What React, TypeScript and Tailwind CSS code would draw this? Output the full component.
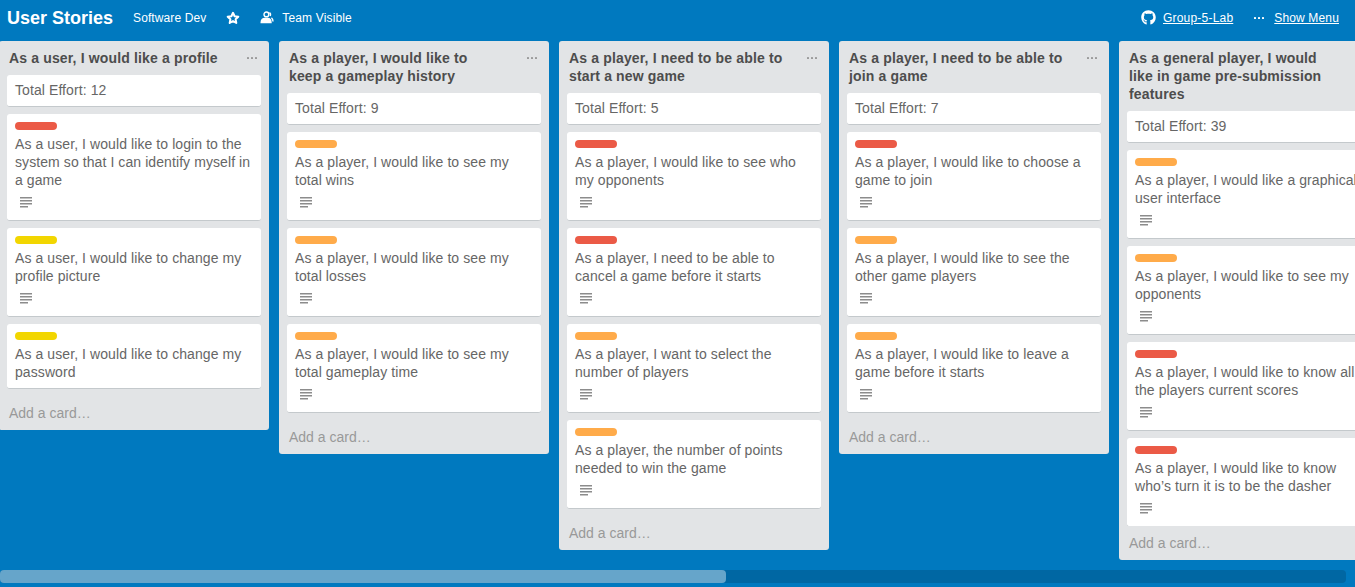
import React from "react";
import { FaGithub } from "react-icons/fa";

type Card = { label: "red" | "orange" | "yellow"; text: string; noBadge?: boolean };
type List = { title: string; effort: number; cards: Card[] };

const labelClass = {
  red: "bg-[#eb5a46]",
  orange: "bg-[#ffab4a]",
  yellow: "bg-[#f2d600]",
};

const lists: List[] = [
  {
    title: "As a user, I would like a profile",
    effort: 12,
    cards: [
      { label: "red", text: "As a user, I would like to login to the system so that I can identify myself in a game" },
      { label: "yellow", text: "As a user, I would like to change my profile picture" },
      { label: "yellow", text: "As a user, I would like to change my password", noBadge: true },
    ],
  },
  {
    title: "As a player, I would like to keep a gameplay history",
    effort: 9,
    cards: [
      { label: "orange", text: "As a player, I would like to see my total wins" },
      { label: "orange", text: "As a player, I would like to see my total losses" },
      { label: "orange", text: "As a player, I would like to see my total gameplay time" },
    ],
  },
  {
    title: "As a player, I need to be able to start a new game",
    effort: 5,
    cards: [
      { label: "red", text: "As a player, I would like to see who my opponents" },
      { label: "red", text: "As a player, I need to be able to cancel a game before it starts" },
      { label: "orange", text: "As a player, I want to select the number of players" },
      { label: "orange", text: "As a player, the number of points needed to win the game" },
    ],
  },
  {
    title: "As a player, I need to be able to join a game",
    effort: 7,
    cards: [
      { label: "red", text: "As a player, I would like to choose a game to join" },
      { label: "orange", text: "As a player, I would like to see the other game players" },
      { label: "orange", text: "As a player, I would like to leave a game before it starts" },
    ],
  },
  {
    title: "As a general player, I would like in game pre-submission features",
    effort: 39,
    cards: [
      { label: "orange", text: "As a player, I would like a graphical user interface" },
      { label: "orange", text: "As a player, I would like to see my opponents" },
      { label: "red", text: "As a player, I would like to know all the players current scores" },
      { label: "red", text: "As a player, I would like to know who\u2019s turn it is to be the dasher" },
    ],
  },
];

function Dots({ className }: { className: string }) {
  return (
    <svg width="10" height="4" viewBox="0 0 10 4" className={className} fill="currentColor">
      <rect x="0" y="1" width="2" height="2" rx="0.6" />
      <rect x="4" y="1" width="2" height="2" rx="0.6" />
      <rect x="8" y="1" width="2" height="2" rx="0.6" />
    </svg>
  );
}

function DescIcon() {
  return (
    <svg width="12" height="12" viewBox="0 0 12 12" className="text-[#8c8c8c]" fill="currentColor">
      <rect x="0" y="0" width="12" height="1.5" />
      <rect x="0" y="3" width="12" height="1.5" />
      <rect x="0" y="6" width="12" height="1.5" />
      <rect x="0" y="9" width="8" height="1.5" />
    </svg>
  );
}

function StarIcon() {
  return (
    <svg width="14" height="14" viewBox="0 0 14 14" fill="none" stroke="white" strokeWidth="2" strokeLinejoin="round">
      <path d="M7 1.8l1.6 3.4 3.7.5-2.7 2.5.7 3.7L7 10.1l-3.3 1.8.7-3.7-2.7-2.5 3.7-.5z" />
    </svg>
  );
}

function TeamIcon() {
  return (
    <svg width="14" height="13" viewBox="0 0 14 13" fill="none" stroke="white" strokeWidth="1.4">
      <circle cx="6.4" cy="3.4" r="2.4" />
      <path d="M1.2 11.6c0-3 1.8-4.2 3.8-4.2h2.6c2 0 3.4 1.2 3.4 4.2z" fill="white" />
      <path d="M9.4 1.6c1 .6 1.3 2.2.8 3.4M11.4 6.8c1 .6 1.6 1.8 1.6 3.6" />
    </svg>
  );
}

function CardView({ card }: { card: Card }) {
  return (
    <div className="mb-[7px] bg-white rounded-[3px] border-b border-[#c4c9cc] pt-2 px-2 pb-[7px]">
      <div className={`${labelClass[card.label]} w-[42px] h-2 rounded-[4px]`} />
      <p className="mt-[5px] text-[14px] leading-[18px] tracking-[0.085px] text-[#666]">{card.text}</p>
      {!card.noBadge && (
        <div className="h-6 pt-2 pl-[5px] flex items-start">
          <DescIcon />
        </div>
      )}
    </div>
  );
}

function ListView({ list }: { list: List }) {
  return (
    <section className="w-[270px] max-h-[519px] shrink-0 bg-[#e2e4e6] rounded-[3px] flex flex-col">
      <div className="shrink-0 pl-[10px] pr-[46px] pt-2 pb-2 relative">
        <h2 className="text-[14px] leading-[18px] font-bold tracking-[0.15px] text-[#4d4d4d]">{list.title}</h2>
        <Dots className="absolute right-[12px] top-[15px] text-[#999]" />
      </div>
      <div className="flex-1 min-h-0 overflow-hidden px-2">
        <div className="mb-[7px] bg-white rounded-[3px] border-b border-[#c4c9cc] px-2 pt-[6px] pb-[7px] text-[14px] leading-[18px] tracking-[0.085px] text-[#666]">
          Total Effort: {list.effort}
        </div>
        {list.cards.map((c, i) => (
          <CardView key={i} card={c} />
        ))}
      </div>
      <div className="shrink-0 h-[34px] px-[10px] flex items-center text-[14px] leading-[18px] text-[#999]">Add a card&hellip;</div>
    </section>
  );
}

export default function App() {
  return (
    <div className="w-[1355px] h-[587px] overflow-hidden bg-[#0079bf] flex flex-col font-['Liberation_Sans',Arial,sans-serif]">
      <header className="h-[41px] shrink-0 flex items-center text-white pl-[7px] pr-[16px] pb-[6px]">
        <h1 className="text-[18px] font-bold leading-[24px]">User Stories</h1>
        <span className="ml-5 text-[12px] tracking-[0.1px]">Software Dev</span>
        <span className="ml-[20px] flex"><StarIcon /></span>
        <span className="ml-[20px] flex"><TeamIcon /></span>
        <span className="ml-2 text-[12px] tracking-[0.15px]">Team Visible</span>
        <div className="ml-auto flex items-center">
          <FaGithub className="text-white" size={15} />
          <a className="ml-[7px] text-[12px] tracking-[0.2px] underline">Group-5-Lab</a>
          <Dots className="ml-[21px] text-white" />
          <a className="ml-[10px] text-[12px] tracking-[0.15px] underline">Show Menu</a>
        </div>
      </header>
      <main className="flex-1 min-h-0 -ml-px flex items-start gap-[10px] overflow-hidden">
        {lists.map((l, i) => (
          <ListView key={i} list={l} />
        ))}
      </main>
      <div className="h-[13px] mb-1 mr-[9px] shrink-0 bg-[#0067a3] rounded-[4px]">
        <div className="h-full w-[726px] bg-[#66a5ca] rounded-[4px]" />
      </div>
    </div>
  );
}
